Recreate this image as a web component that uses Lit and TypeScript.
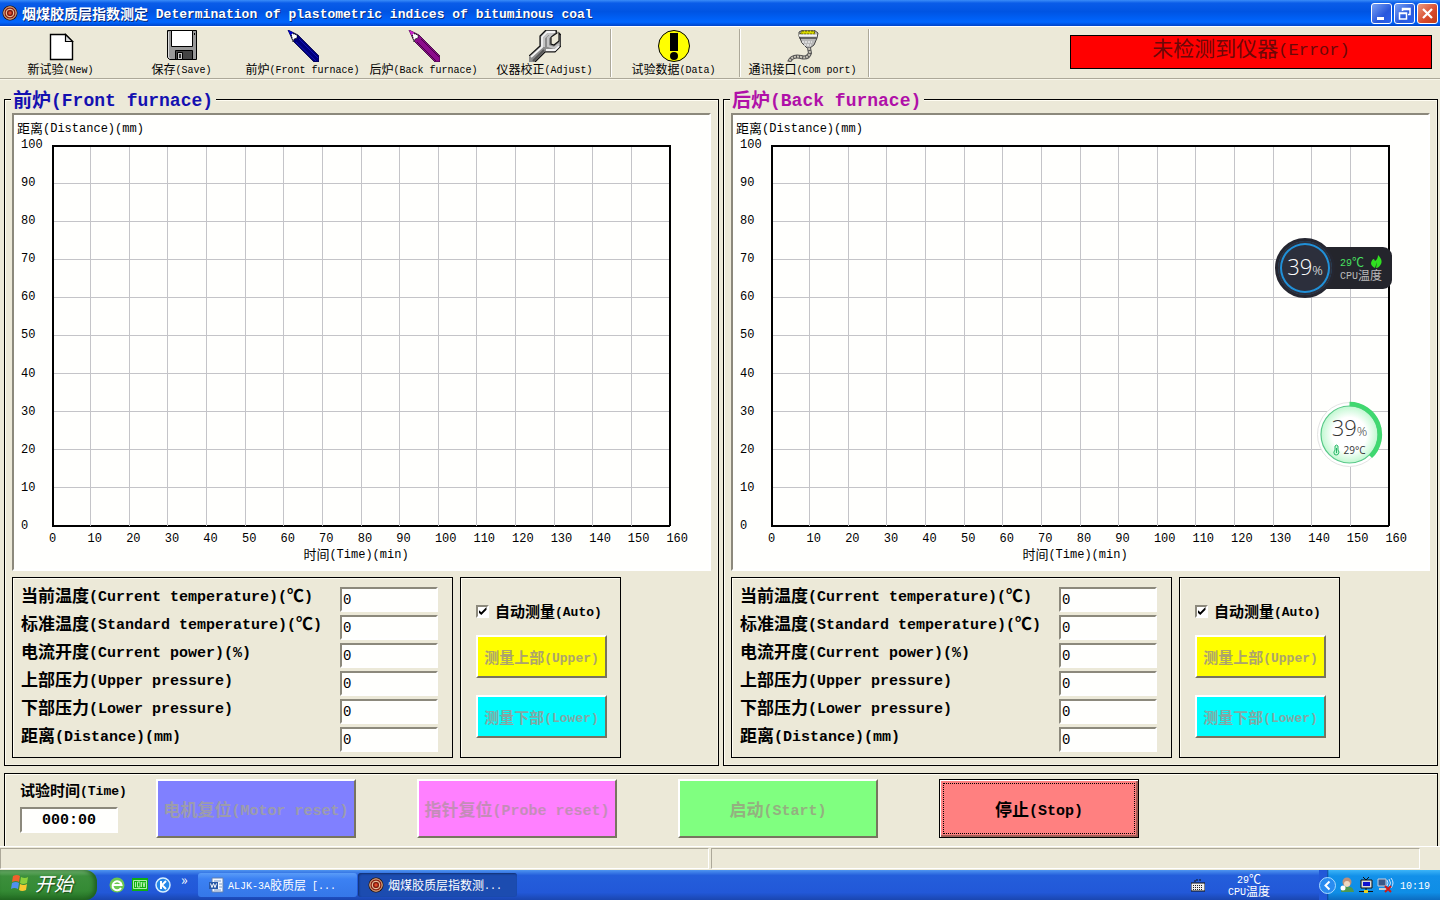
import { LitElement, html, svg, css } from "lit";
import { customElement, property } from "lit/decorators.js";

const base = css`
  * { box-sizing: border-box; }
  .lat { font-family: "Liberation Mono", monospace; line-height: 0; vertical-align: 1px; }
  .t10 .lat { font-size: 10px; }
  .t12 .lat { font-size: 12px; }
  .t13 .lat { font-size: 13px; }
  .t15 .lat { font-size: 15px; }
  .t18 .lat { font-size: 18px; }
  .t10 { font-size: 12px; line-height: 14px; }
  .t12 { font-size: 13px; line-height: 16px; }
  .t13 { font-size: 15px; line-height: 18px; font-weight: bold; }
  .t15 { font-size: 17px; line-height: 20px; font-weight: bold; }
  .t18 { font-size: 19px; line-height: 22px; font-weight: bold; }
`;

/** Half-width runs are set in a monospaced face, full-width runs in the CJK face. */
const mixed = (text: string) =>
  text.split(/([\x20-\x7e]+)/).filter(Boolean).map((run) =>
    /^[\x20-\x7e]/.test(run) ? html`<span class="lat">${run}</span>` : run);

const target = html`<svg class="target" viewBox="0 0 16 16" width="16" height="16" aria-hidden="true">
  <circle cx="8" cy="8" r="7.5" fill="#2a1008"/><circle cx="8" cy="8" r="6.2" fill="#8c2414" stroke="#f2c9a0"/>
  <circle cx="8" cy="8" r="3.8" fill="#7c1c10" stroke="#f5d8b0"/><circle cx="8" cy="8" r="1.7" fill="#e0492a"/></svg>`;

const icons: Record<string, unknown> = {
  new: svg`<path d="M5.500 4.500h15l7 7v18h-22z" fill="#fff" stroke="#000" stroke-width="1.400"/><path d="M20.500 4.500v7h7z" fill="#ddd" stroke="#000" stroke-width="1.200"/>`,
  save: svg`<path d="M1.500.5h29v29h-27l-2-2z" fill="#999" stroke="#000"/><path d="M5.500.5h21v16h-21z" fill="#fff" stroke="#000"/><path d="M28 3h1v2h-1z" fill="#000"/><path d="M9.500 20.500h17v9h-17z" fill="#444" stroke="#000"/><path d="M11.500 22.500h5v7h-5z" fill="#c8c8c8" stroke="#000"/><path d="M13 24h2v4h-2z" fill="#333"/><path d="M2.500 2v25l1.500 1.500" fill="none" stroke="#ddd"/>`,
  front: svg`<path d="M1 0l10 5 21 21v6h-5L6 11z" fill="#00007c" stroke="#000040" stroke-width=".8"/><path d="M4 3l6 2v3l-3 1-1 3z" fill="#fff" stroke="#000" stroke-dasharray="1 1"/><path d="M1 0l5 2.500-2.500 3z" fill="#00c"/><path d="M9 12l20 19M12 9l19 19" stroke="#1414b4"/>`,
  back: svg`<path d="M1 0l10 5 21 21v6h-5L6 11z" fill="#8c0c8c" stroke="#300030" stroke-width=".8"/><path d="M4 3l6 2v3l-3 1-1 3z" fill="#fff" stroke="#000" stroke-dasharray="1 1"/><path d="M1 0l5 2.500-2.500 3z" fill="#d020d0"/><path d="M9 12l19 19M13 9l18 18" stroke="#4a004a"/>`,
  adjust: svg`<path d="M0 27L11 16V6l6-6h10l1 3-6 4v7l3 1 5-4V3l2 2v11l-6 6H16L6 32H0z" fill="#8c8c8c"/><path d="M0 26l11-10V6l6-6h10l1 3-6 4v7l3 1 5-4V3l2 2v11l-6 6H16L6 32" fill="none" stroke="#111" stroke-width="1.200"/><path d="M2 27l11-10V7l5-5h8M17 20h9l4-4" stroke="#f4f4f4" stroke-width="1.800" fill="none"/><path d="M15 17V8l4-4h4l-4 4v8l6 2 5-4" fill="none" stroke="#c4c4c4" stroke-width="2"/><path d="M4 31l11-11" stroke="#555" stroke-width="2"/>`,
  data: svg`<circle cx="16" cy="16" r="15.500" fill="#ff0" stroke="#000"/><path d="M12 3h8v18h-8z"/><circle cx="16" cy="26" r="4"/>`,
  com: svg`<path d="M12 2l4-2h11l4 3-1 5-3 7-4 3h-3l-5-5-3-7z" fill="#b8b8b8" stroke="#444"/><path d="M15 1h12l1 3H13z" fill="#d8d800" stroke="#555500" stroke-dasharray="2 1"/><path d="M12 5.500h18" stroke="#f4f4f4" stroke-width="2"/><path d="M12.500 8h17" stroke="#111"/><path d="M15 12h10m-8 3h7" stroke="#fff" stroke-dasharray="2 1"/><path d="M22 18l1 5q-2 6-9 4-9-2-12 5" fill="none" stroke="#555" stroke-width="4"/><path d="M22 18l1 5q-2 6-9 4-9-2-12 5" fill="none" stroke="#c9c5b8" stroke-width="2" stroke-dasharray="2 1"/>`,
};

@customElement("furnace-chart")
export class FurnaceChart extends LitElement {
  static styles = [base, css`
    :host { display: flex; flex-direction: column; flex: 1; min-height: 0; padding: 5px 0 7px 3px; background: #fffffd; color: #000;
      border: 2px solid; border-color: #8c897c #fff #fff #8c897c; }
    .plot { flex: 1; min-height: 0; display: flex; margin: 9px 39px 0 4px; }
    .ys { width: 31px; display: flex; flex-direction: column; justify-content: space-between; margin: -7px 0; }
    .ys .lat, .xs .lat { line-height: 14px; }
    .grid { flex: 1; width: 0; min-width: 0; min-height: 0; overflow: visible; display: block; shape-rendering: crispEdges; }
    .xs { display: grid; grid-template-columns: repeat(17, 1fr); margin: 6px 4px 0 32px; }
    .xs .lat { width: 0; }
    .caption { text-align: center; padding-right: 14px; }
  `];
  render() {
    const ys = Array.from({ length: 11 }, (_, i) => 100 - i * 10);
    const xs = Array.from({ length: 17 }, (_, i) => i * 10);
    return html`
      <div class="t12">${mixed("距离(Distance)(mm)")}</div>
      <div class="plot t12">
        <div class="ys">${ys.map((v) => html`<span class="lat">${v}</span>`)}</div>
        <svg class="grid" aria-hidden="true">
          <line x1="0" x2="100%" y1="1" y2="1" stroke="#000" stroke-width="2"/>
          <line x1="0" x2="100%" y1="100%" y2="100%" stroke="#000" stroke-width="2"/>
          ${xs.slice(1, -1).map((_, i) => svg`<line x1="${(i + 1) * 6.25}%" x2="${(i + 1) * 6.25}%" y1="2" y2="100%" stroke="#c4c4c8"/>`)}
          ${ys.slice(1, -1).map((_, i) => svg`<line x1="0" x2="100%" y1="${(i + 1) * 10}%" y2="${(i + 1) * 10}%" stroke="#c4c4c8"/>`)}
          <line x1="1" x2="1" y1="0" y2="100%" stroke="#000" stroke-width="2"/>
          <line x1="100%" x2="100%" y1="0" y2="100%" stroke="#000" stroke-width="2"/>
        </svg>
      </div>
      <div class="xs t12">${xs.map((v) => html`<span class="lat">${v}</span>`)}</div>
      <div class="caption t12">${mixed("时间(Time)(min)")}</div>`;
  }
}

const readings = ["当前温度(Current temperature)(℃)", "标准温度(Standard temperature)(℃)", "电流开度(Current power)(%)",
  "上部压力(Upper pressure)", "下部压力(Lower pressure)", "距离(Distance)(mm)"];

@customElement("furnace-panel")
export class FurnacePanel extends LitElement {
  @property() heading = "";
  @property() tone = "front";
  static styles = [base, css`
    :host { display: flex; flex: 1; min-width: 0; }
    .group { flex: 1; min-width: 0; margin: 0; padding: 3px 7px 7px; border: 1px solid #000; display: flex; flex-direction: column;
      box-shadow: inset 1px 1px 0 #fffdf2, inset -1px -1px 0 #f5f2e4; }
    legend { padding: 0 3px 0 2px; background: #ece9d8; margin-left: -1px; }
    .front { color: #1410b0; }
    .back { color: #b010a8; }
    .lower { display: flex; gap: 7px; margin-top: 6px; }
    .box { border: 1px solid #000; box-shadow: inset 1px 1px 0 #fffdf2; }
    .readings { width: 441px; padding: 9px 14px 2px 8px; }
    .row { display: flex; justify-content: space-between; height: 28px; }
    .row .t15 { line-height: 16px; }
    .field { width: 98px; height: 25px; padding: 0 1px; border: 2px solid; border-color: #8c897c #fff #fff #8c897c;
      background: #fffffd; font: 14px "Liberation Mono", monospace; color: #000; border-radius: 0; }
    .auto { width: 161px; padding: 24px 13px 0 15px; display: flex; flex-direction: column; }
    .tick { display: flex; gap: 6px; align-items: center; margin-bottom: 15px; }
    .check { appearance: none; width: 13px; height: 13px; margin: 0; background: #fff; border: 2px solid; border-color: #8c897c #fff #fff #8c897c; display: grid; place-items: center; }
    .check:checked::before { content: ""; width: 8px; height: 8px; background: #000; clip-path: polygon(0 35%, 35% 65%, 100% 0, 100% 35%, 35% 100%, 0 70%); }
    .btn { height: 43px; margin-bottom: 17px; padding: 0; border: 2px solid; border-color: #fff #77745f #77745f #fff; border-radius: 0;
      color: #aca46c; font-family: inherit; white-space: nowrap; }
    .yellow { background: #ff0; }
    .cyan { background: #0ff; color: #84a8a4; }
  `];
  render() {
    return html`<fieldset class="group">
      <legend class="t18 ${this.tone}">${mixed(this.heading)}</legend>
      <furnace-chart></furnace-chart>
      <div class="lower">
        <div class="box readings">${readings.map((r, i) => html`<div class="row">
          <label class="t15" for="f${i}">${mixed(r)}</label><input class="field" id="f${i}" .value=${"0"}></div>`)}</div>
        <div class="box auto">
          <label class="tick t13"><input class="check" type="checkbox" checked><span>${mixed("自动测量(Auto)")}</span></label>
          <button class="btn yellow t13" disabled>${mixed("测量上部(Upper)")}</button>
          <button class="btn cyan t13" disabled>${mixed("测量下部(Lower)")}</button>
        </div>
      </div>
    </fieldset>`;
  }
}

@customElement("app-root")
export class AppRoot extends LitElement {
  static styles = [base, css`
    :host { display: flex; flex-direction: column; min-height: 100vh; position: relative; background: #ece9d8; color: #000;
      font-family: "Noto Sans CJK SC", sans-serif; overflow: hidden; }
    button { font-family: inherit; cursor: default; }
    .title { height: 26px; display: flex; align-items: center; padding: 0 2px; color: #fff;
      background: linear-gradient(#3a8cf8, #0a5ce8 12%, #0054e3 45%, #0066ff 85%, #0044c8); }
    .title h1 { margin: 0 auto 0 4px; font-size: 14px; white-space: pre; text-shadow: 1px 1px 0 #0b2b78; }
    .title .lat { white-space: pre; }
    .wins { display: flex; gap: 2px; }
    .win { width: 21px; height: 21px; padding: 0; border: 1px solid #fff; border-radius: 3px; background: linear-gradient(135deg, #7aa2f4, #2858dc 60%, #2a62ee); display: grid; place-items: center; }
    .close { background: linear-gradient(135deg, #eb9a80, #d8492a 60%, #c03c18); }
    .tools { height: 53px; display: flex; align-items: center; border-top: 1px solid #fff; border-bottom: 1px solid #aca899; box-shadow: 0 1px 0 #f8f6ea; }
    .tool { width: 121px; height: 50px; padding: 2px 0 0; border: 0; background: none; color: #000; display: flex; flex-direction: column; align-items: center; white-space: nowrap; }
    .tool svg { flex: none; }
    .sep { width: 2px; height: 48px; border-left: 1px solid #aca899; border-right: 1px solid #fff; margin: 0 1px 0 5px; }
    .alert { width: 362px; height: 34px; margin: 0 8px 2px auto; background: #f00; border: 1px solid #000; color: #6c0808; font-size: 21px; line-height: 22px; text-align: center; }
    .alert .lat { font-size: 17px; }
    .work { flex: 1; min-height: 0; display: flex; gap: 4px; padding: 9px 2px 7px 4px; }
    .bar { margin: 0 2px 0 4px; height: 73px; display: flex; padding: 5px 15px 0; border: 1px solid #000; border-bottom: 0; box-shadow: inset 1px 1px 0 #fffdf2, 0 1px 0 #fff; }
    .time { width: 136px; padding-top: 2px; }
    .time label { display: block; margin-bottom: 8px; }
    .clockbox { display: block; width: 98px; height: 26px; padding: 0; text-align: center; border: 2px solid; border-color: #8c897c #fff #fff #8c897c; background: #fffffd; font: bold 15px "Liberation Mono", monospace; color: #000; border-radius: 0; }
    .acts { display: flex; gap: 61px; }
    .act { width: 200px; height: 59px; padding: 0; border: 2px solid; border-color: #fff #77745f #77745f #fff; border-radius: 0; white-space: nowrap; }
    .motor { background: #8080ff; color: #9c9cac; }
    .probe { background: #ff80ff; color: #c48cb8; }
    .start { background: #80ff80; color: #94b080; }
    .stop { background: #ff8080; color: #000; border: 1px solid #000; box-shadow: inset 1px 1px 0 #fff, inset -2px -2px 0 #a06058; outline: 1px dotted #000; outline-offset: -5px; }
    .status { height: 24px; display: flex; gap: 2px; padding: 1px 20px 1px 0; border-top: 1px solid #fff; }
    .cell { flex: 1; border: 1px solid; border-color: #aca899 #fff #fff #aca899; }
    .task { height: 30px; display: flex; align-items: center; color: #fff; background: linear-gradient(#4e94f0, #245edb 18%, #2258d8 75%, #1a46b0); }
    .go { width: 97px; height: 30px; border: 0; padding: 0 0 4px 10px; display: flex; align-items: center; gap: 5px; color: #fff; font-size: 19px; line-height: 22px; font-style: italic;
      border-radius: 0 12px 12px 0; background: linear-gradient(#79b878, #3c8f3c 20%, #348a34 70%, #236c23); box-shadow: inset -3px 0 4px #1f5f1f; text-shadow: 1px 1px 1px #1a4a1a; }
    .quick { width: 101px; padding-left: 12px; display: flex; gap: 7px; align-items: center; align-self: stretch; }
    .more { align-self: flex-start; font-size: 14px; line-height: 14px; margin: 2px 0 0 3px; }
    .tasks { display: flex; gap: 1px; align-self: flex-end; }
    .item { width: 159px; height: 24px; margin-bottom: 3px; padding: 0 10px; border: 0; border-radius: 3px; display: flex; align-items: center; gap: 4px; color: #fff; background: linear-gradient(#5a9cf8, #3c81f3 25%, #3577e8); white-space: pre; }
    .item .lat { white-space: pre; }
    .on { background: #1c4cb0; box-shadow: inset 1px 1px 2px #123070; }
    .kbd { margin-left: auto; }
    .temp { width: 88px; text-align: center; line-height: 12px; }
    .tray { width: 121px; margin-left: 26px; height: 30px; padding-right: 10px; display: flex; align-items: center; justify-content: flex-end; gap: 3px; background: linear-gradient(90deg, transparent 8px, #0d3f98 8px, transparent 10px), linear-gradient(90deg, #2258d8 8px, transparent 8px), linear-gradient(#3cb4f8, #1290e9 20%, #0f8ee6 75%, #0c6cc0); }
    .tray time { margin-left: 3px; }
    .gauge { position: absolute; right: 48px; top: 238px; display: flex; align-items: center; }
    .dial { width: 60px; height: 60px; border-radius: 50%; background: #2c2f3c; border: 3px solid #252630; box-shadow: inset 0 0 0 2px #2c2f3c, inset 0 0 0 4px #2090d8; color: #fff; display: flex; align-items: baseline; justify-content: center; font: 300 22px/50px "Open Sans", sans-serif; z-index: 1; }
    .dial small { font-size: 13px; }
    .side { width: 66px; height: 42px; margin-left: -9px; padding: 8px 10px 0 11px; border-radius: 0 9px 9px 0; background: #24252c; color: #bbb; line-height: 13px; text-align: right; white-space: nowrap; }
    .side p { margin: 0; height: 13px; display: flex; justify-content: flex-end; gap: 7px; color: #48e060; }
    .orb { position: absolute; right: 57px; top: 401px; width: 67px; height: 67px; color: #333; display: flex; flex-direction: column; align-items: center; padding-top: 14px; font: 300 22px/24px "Open Sans", sans-serif; }
    .orb .ring { position: absolute; inset: 0; }
    .orb span { position: relative; }
    .orb small { font-size: 13px; }
    .orb .deg { display: flex; gap: 3px; align-items: center; font-size: 10px; font-weight: 400; line-height: 14px; }
  `];

  private tool(icon: string, text: string) {
    return html`<button class="tool t10"><svg width="32" height="32" viewBox="0 0 32 32" aria-hidden="true">${icons[icon]}</svg><span>${mixed(text)}</span></button>`;
  }

  render() {
    return html`
      <header class="title t13">${target}<h1>${mixed("烟煤胶质层指数测定 Determination of plastometric indices of bituminous coal")}</h1>
        <div class="wins">
          <button class="win" aria-label="Minimize"><svg width="17" height="17"><path d="M4 12h7v3H4z" fill="#fff"/></svg></button>
          <button class="win" aria-label="Restore"><svg width="17" height="17" fill="none" stroke="#fff" stroke-width="1.500"><path d="M3.500 8h7v6h-7zM6.500 6V3.500h7.500v6h-2M6 4.500h8M3.500 8.500h7"/></svg></button>
          <button class="win close" aria-label="Close"><svg width="17" height="17"><path d="M4 4l9 9M13 4l-9 9" stroke="#fff" stroke-width="2.200"/></svg></button>
        </div></header>
      <nav class="tools">
        ${this.tool("new", "新试验(New)")}${this.tool("save", "保存(Save)")}${this.tool("front", "前炉(Front furnace)")}${this.tool("back", "后炉(Back furnace)")}${this.tool("adjust", "仪器校正(Adjust)")}
        <i class="sep"></i>${this.tool("data", "试验数据(Data)")}<i class="sep"></i>${this.tool("com", "通讯接口(Com port)")}<i class="sep"></i>
        <div class="alert" role="alert">${mixed("未检测到仪器(Error)")}</div>
      </nav>
      <main class="work">
        <furnace-panel heading="前炉(Front furnace)" tone="front"></furnace-panel>
        <furnace-panel heading="后炉(Back furnace)" tone="back"></furnace-panel>
      </main>
      <section class="bar">
        <div class="time"><label class="t13" for="elapsed">${mixed("试验时间(Time)")}</label><input class="clockbox" id="elapsed" .value=${"000:00"}></div>
        <div class="acts">
          <button class="act motor t15" disabled>${mixed("电机复位(Motor reset)")}</button>
          <button class="act probe t15" disabled>${mixed("指针复位(Probe reset)")}</button>
          <button class="act start t15" disabled>${mixed("启动(Start)")}</button>
          <button class="act stop t15">${mixed("停止(Stop)")}</button>
        </div>
      </section>
      <div class="status"><div class="cell"></div><div class="cell"></div></div>
      <footer class="task">
        <button class="go"><svg width="20" height="20" viewBox="0 0 20 20" aria-hidden="true"><path d="M3 3q4-2 7 0L9 9q-3-2-7 0z" fill="#f0602c"/><path d="M11 4q4 2 7 0l-1 6q-4 2-7 0z" fill="#8cd03c"/><path d="M2 10q4-2 7 0l-1 6q-4-2-7 0z" fill="#5090f0"/><path d="M10 11q4 2 7 0l-1 6q-4 2-7 0z" fill="#f8c830"/></svg><span>开始</span></button>
        <div class="quick">
          <svg width="16" height="16" viewBox="0 0 16 16" aria-hidden="true"><circle cx="8" cy="8" r="7.500" fill="#6cc850"/><path d="M12 11a4.500 4.500 0 1 1 .5-3H4" fill="none" stroke="#fff" stroke-width="2"/></svg>
          <svg width="16" height="16" viewBox="0 0 16 16" aria-hidden="true"><path d="M0 1h16v13H0z" fill="#10b010"/><path d="M1.500 3.500h13v8h-13zM3.500 5v5M5.500 5h2.500v5H5.500zM9.500 5v5M11 5l1 5 1-5" fill="none" stroke="#d8ffd0" stroke-width=".8"/></svg>
          <svg width="16" height="16" viewBox="0 0 16 16" aria-hidden="true"><circle cx="8" cy="8" r="7" fill="#2488e8" stroke="#d8f0ff" stroke-width="1.500"/><path d="M6 4v8M11 4L7 8l4 4" fill="none" stroke="#fff" stroke-width="2"/></svg>
          <span class="more">»</span>
        </div>
        <div class="tasks">
          <button class="item t10"><svg width="16" height="16" viewBox="0 0 16 16" aria-hidden="true"><path d="M4 1h11v14H4z" fill="#f4f8ff" stroke="#6080b0"/><path d="M6 4h7M11 7h3M11 10h3M6 13h7" stroke="#7898c8"/><path d="M1 5h9v7H1z" fill="#2858a8"/><path d="M2.500 6.500l1.500 4 1.500-4 1.500 4 1.500-4" fill="none" stroke="#fff"/></svg><span>${mixed("ALJK-3A胶质层 [...")}</span></button>
          <button class="item on t10">${target}<span>${mixed("烟煤胶质层指数测...")}</span></button>
        </div>
        <svg class="kbd" width="14" height="14" viewBox="0 0 14 14" aria-hidden="true"><path d="M0 5h14v8H0z" fill="#eee" stroke="#111"/><path d="M2 7.500h10M2 9.500h10M2 11.500h10" stroke="#222" stroke-dasharray="1 1"/><path d="M4 4V2h7" stroke="#111" fill="none" stroke-dasharray="2 1"/></svg>
        <div class="temp t10">${mixed("29℃")}<br>${mixed("CPU温度")}</div>
        <div class="tray t10">
          <svg width="17" height="17" viewBox="0 0 17 17" aria-hidden="true"><circle cx="8.500" cy="8.500" r="8" fill="#2a8cf0" stroke="#a8dcff"/><path d="M10.500 4.500l-4 4 4 4" fill="none" stroke="#fff" stroke-width="2"/></svg>
          <svg width="16" height="16" viewBox="0 0 16 16" aria-hidden="true"><circle cx="8" cy="5" r="4.500" fill="#c09078"/><circle cx="8" cy="7" r="3" fill="#f0d8c0"/><path d="M2 15q0-6 6-5 6-1 7 5z" fill="#4c9850"/><circle cx="4" cy="11" r="2.500" fill="#fff"/></svg>
          <svg width="16" height="16" viewBox="0 0 16 16" aria-hidden="true"><path d="M5 0l3 3 3-3" fill="none" stroke="#111"/><path d="M3 3h11v8H3z" fill="#dcdcdc" stroke="#111"/><path d="M5 5h7v4H5z" fill="#1010d0"/><path d="M8 11v3M1 14.500h14" stroke="#111"/><path d="M6 13h4v3H6z" fill="#e8d020"/></svg>
          <svg width="17" height="16" viewBox="0 0 17 16" aria-hidden="true"><path d="M1 2h8v7H1z" fill="#385888" stroke="#c8d0e0"/><path d="M2 12h8" stroke="#ccc" stroke-width="2"/><path d="M10 3q2 3 0 6M12 2q3 4 0 8M14 1q4 5 0 10" fill="none" stroke="#d0e4ff"/><path d="M8 9l6 6M14 9l-6 6" stroke="#d01818" stroke-width="2"/></svg>
          <time>${mixed("10:19")}</time>
        </div>
      </footer>
      <aside class="gauge" aria-label="CPU">
        <div class="dial">39<small>%</small></div>
        <div class="side t10"><p><span>${mixed("29℃")}</span><svg width="11" height="14" viewBox="0 0 11 14" aria-hidden="true"><path d="M7 0q5 5 3 9-2 4-5 4l1-6-2 6Q0 11 0 8q1-4 3-4l1 2q3-2 3-6z" fill="#30e020"/></svg></p>${mixed("CPU温度")}</div>
      </aside>
      <aside class="orb" aria-label="CPU">
        <svg class="ring" width="67" height="67" viewBox="0 0 67 67" aria-hidden="true">
          <defs><radialGradient id="g"><stop offset=".6" stop-color="#fff"/><stop offset="1" stop-color="#c0f8d0"/></radialGradient></defs>
          <circle cx="33.500" cy="33.500" r="32" fill="#fff" stroke="#e4e4e4"/><circle cx="33.500" cy="33.500" r="28.500" fill="url(#g)" stroke="#58c888" stroke-width="1.200"/>
          <path d="M33.500 3a30.500 30.500 0 0 1 21 52.500" fill="none" stroke="#40d870" stroke-width="4.500"/></svg>
        <span>39<small>%</small></span>
        <span class="deg"><svg width="7" height="12" viewBox="0 0 7 12" aria-hidden="true"><path d="M2 6V2q1.500-2 3 0v4q2 2 0 4.500-2 1-3.500 0-1.500-2.500.5-4.500z" fill="#c8f8d8" stroke="#28b868"/><path d="M3.500 4v5" stroke="#28b868"/></svg>29°C</span>
      </aside>`;
  }
}
